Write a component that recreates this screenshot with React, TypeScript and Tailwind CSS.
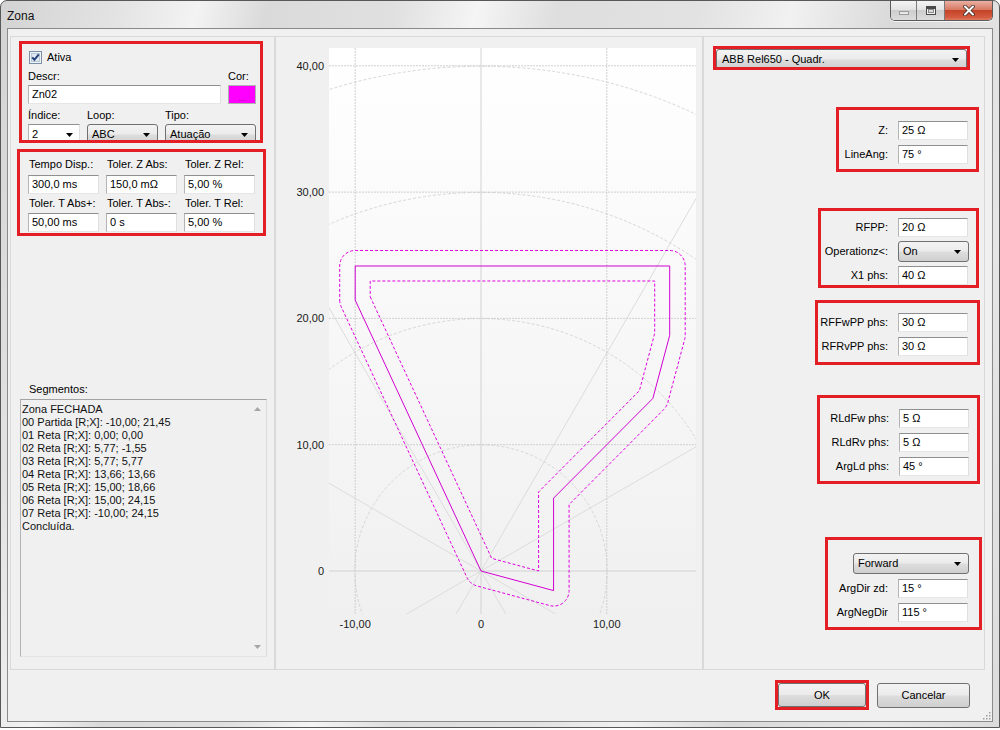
import React from "react";

type Pt = [number, number];

// chart scale: page pixels per unit
const sx = (r: number) => 481 + r * 12.58;
const sy = (x: number) => 571 - x * 12.63;

const zone: Pt[] = (
  [
    [-10, 21.45],
    [0, 0],
    [5.77, -1.55],
    [5.77, 5.77],
    [13.66, 13.66],
    [15, 18.66],
    [15, 24.15],
    [-10, 24.15],
  ] as Pt[]
).map(([r, x]) => [sx(r), sy(x)] as Pt);

function offsetPath(pts: Pt[], d: number, round: boolean) {
  const n = pts.length;
  const dirs = pts.map((p, i) => {
    const q = pts[(i + 1) % n];
    const dx = q[0] - p[0];
    const dy = q[1] - p[1];
    const l = Math.hypot(dx, dy);
    return [dx / l, dy / l] as Pt;
  });
  const norms = dirs.map(([dx, dy]) => [-dy, dx] as Pt);
  const parts: string[] = [];
  const f = (v: number) => v.toFixed(2);
  pts.forEach((p, i) => {
    const j = (i - 1 + n) % n;
    const e1 = dirs[j];
    const e2 = dirs[i];
    const a1: Pt = [p[0] + norms[j][0] * d, p[1] + norms[j][1] * d];
    const a2: Pt = [p[0] + norms[i][0] * d, p[1] + norms[i][1] * d];
    const cr = e1[0] * e2[1] - e1[1] * e2[0];
    const cmd = parts.length ? "L" : "M";
    if (round && cr < 0) {
      parts.push(`${cmd}${f(a1[0])},${f(a1[1])}`);
      parts.push(`A${d},${d} 0 0 0 ${f(a2[0])},${f(a2[1])}`);
    } else {
      const t = ((a2[0] - a1[0]) * e2[1] - (a2[1] - a1[1]) * e2[0]) / cr;
      parts.push(`${cmd}${f(a1[0] + e1[0] * t)},${f(a1[1] + e1[1] * t)}`);
    }
  });
  return parts.join(" ") + " Z";
}

function Chart() {
  const ox = 481;
  const oy = 571;
  const labelFont = "'Liberation Sans', Arial, sans-serif";
  const zonePath =
    zone.map((p, i) => `${i ? "L" : "M"}${p[0].toFixed(2)},${p[1].toFixed(2)}`).join(" ") + " Z";
  return (
    <svg width={426} height={632} viewBox="276 37 426 632" className="block">
      <defs>
        <linearGradient id="plotBg" x1="0" y1="0" x2="0" y2="1">
          <stop offset="0" stopColor="#ffffff" />
          <stop offset="1" stopColor="#f0f0f0" />
        </linearGradient>
        <clipPath id="plotClip">
          <rect x={329} y={48} width={367} height={566} />
        </clipPath>
      </defs>
      <rect x={329} y={48} width={367} height={566} fill="url(#plotBg)" />
      <g clipPath="url(#plotClip)" fill="none">
        {[1, 2, 3, 4].map((k) => (
          <circle key={k} cx={ox} cy={oy} r={126.2 * k} stroke="#d6d6d6" strokeDasharray="3 2" />
        ))}
        {[30, 60, 120, 150, 210, 240, 300, 330].map((a) => (
          <line
            key={a}
            x1={ox}
            y1={oy}
            x2={ox + 800 * Math.cos((a * Math.PI) / 180)}
            y2={oy - 800 * Math.sin((a * Math.PI) / 180)}
            stroke="#dcdcdc"
          />
        ))}
        {[sx(-10), sx(10)].map((x) => (
          <line key={x} x1={x} y1={48} x2={x} y2={614} stroke="#cfcfcf" strokeDasharray="2 1" />
        ))}
        {[10, 20, 30, 40].map((v) => (
          <line key={v} x1={329} y1={sy(v)} x2={696} y2={sy(v)} stroke="#cfcfcf" strokeDasharray="2 1" />
        ))}
        <line x1={ox} y1={48} x2={ox} y2={614} stroke="#d2d2d2" />
        <line x1={329} y1={oy} x2={696} y2={oy} stroke="#d2d2d2" />
        <path d={offsetPath(zone, 15.5, true)} stroke="#e000e0" strokeDasharray="3 2" />
        <path d={offsetPath(zone, -15, false)} stroke="#e000e0" strokeDasharray="3 2" />
        <path d={zonePath} stroke="#d100d1" />
      </g>
      <g fontFamily={labelFont} fontSize={11} fill="#1a1a1a">
        {[
          ["40,00", 40],
          ["30,00", 30],
          ["20,00", 20],
          ["10,00", 10],
          ["0", 0],
        ].map(([t, v]) => (
          <text key={t as string} x={324} y={sy(v as number) + 4} textAnchor="end">
            {t}
          </text>
        ))}
        {[
          ["-10,00", -10],
          ["0", 0],
          ["10,00", 10],
        ].map(([t, v]) => (
          <text key={t as string} x={sx(v as number)} y={628} textAnchor="middle">
            {t}
          </text>
        ))}
      </g>
    </svg>
  );
}

function Arrow() {
  return (
    <svg width="7" height="4" viewBox="0 0 7 4" className="shrink-0">
      <polygon points="0,0 7,0 3.5,4" fill="#000" />
    </svg>
  );
}

function TextBox({ value, className = "" }: { value: string; className?: string }) {
  return (
    <div
      className={`h-[19px] shrink-0 bg-white border border-t-[#8e8f8f] border-l-[#b4b4b4] border-r-[#dfdfdf] border-b-[#e6e6e6] flex items-center pl-[3px] whitespace-nowrap ${className}`}
    >
      {value}
    </div>
  );
}

function Combo({ value, className = "" }: { value: string; className?: string }) {
  return (
    <div
      className={`h-[21px] shrink-0 rounded-[3px] border border-[#707070] bg-[linear-gradient(#f3f3f3_0%,#ebebeb_48%,#dddddd_52%,#cfcfcf_100%)] flex items-center pl-[4px] pr-[7px] whitespace-nowrap ${className}`}
    >
      <span className="flex-1">{value}</span>
      <Arrow />
    </div>
  );
}

function Row({ label, children }: { label: string; children: React.ReactNode }) {
  return (
    <div className="flex items-center justify-end gap-[10px]">
      <span className="whitespace-nowrap">{label}</span>
      {children}
    </div>
  );
}

const segmentos = [
  "Zona FECHADA",
  "00 Partida [R;X]: -10,00; 21,45",
  "01 Reta [R;X]: 0,00; 0,00",
  "02 Reta [R;X]: 5,77; -1,55",
  "03 Reta [R;X]: 5,77; 5,77",
  "04 Reta [R;X]: 13,66; 13,66",
  "05 Reta [R;X]: 15,00; 18,66",
  "06 Reta [R;X]: 15,00; 24,15",
  "07 Reta [R;X]: -10,00; 24,15",
  "Concluída.",
];

function LeftPanel() {
  return (
    <div className="w-[265px] h-[634px] shrink-0 border border-[#d9d9d9] flex flex-col">
      <div className="ml-[8px] mt-[4px] w-[244px] h-[102px] border-[3px] border-[#e31e24] overflow-hidden flex flex-col">
        <div className="mt-[7px] ml-[7px] flex items-center gap-[5px] h-[13px]">
          <svg width="13" height="13" viewBox="0 0 13 13">
            <rect x="0.5" y="0.5" width="12" height="12" fill="#eef3f8" stroke="#7b8ea6" />
            <rect x="2.5" y="2.5" width="8" height="8" fill="#dfe7f0" stroke="#b9c6d6" />
            <path d="M3.2 6.4 L5.4 8.8 L9.8 3.4" stroke="#24417a" strokeWidth="2" fill="none" />
          </svg>
          <span>Ativa</span>
        </div>
        <div className="mt-[6px] ml-[6px] flex h-[13px]">
          <span className="w-[200px]">Descr:</span>
          <span>Cor:</span>
        </div>
        <div className="mt-[2px] ml-[6px] flex gap-[7px]">
          <TextBox value="Zn02" className="w-[193px]" />
          <div className="w-[28px] h-[19px] bg-[#ff00ff] border border-[#b0b0b0] flex items-end justify-center text-[9px] leading-[10px] text-[#a000a0]">
            ...
          </div>
        </div>
        <div className="mt-[5px] ml-[6px] flex h-[13px]">
          <span className="w-[59px]">Índice:</span>
          <span className="w-[78px]">Loop:</span>
          <span>Tipo:</span>
        </div>
        <div className="mt-[2px] ml-[6px] flex gap-[7px]">
          <div className="w-[52px] h-[21px] bg-white border border-t-[#8e8f8f] border-l-[#b4b4b4] border-r-[#dfdfdf] border-b-[#e6e6e6] flex items-center pl-[3px] pr-[6px]">
            <span className="flex-1">2</span>
            <Arrow />
          </div>
          <Combo value="ABC" className="w-[71px]" />
          <Combo value="Atuação" className="w-[91px]" />
        </div>
      </div>

      <div className="ml-[6px] mt-[6px] w-[249px] h-[87px] border-[3px] border-[#e31e24] overflow-hidden">
        <div className="pl-[8px] pt-[6px] grid grid-cols-[71px_71px_71px] gap-x-[7px]">
          <span className="pl-[1px] h-[13px] whitespace-nowrap">Tempo Disp.:</span>
          <span className="pl-[1px] h-[13px] whitespace-nowrap">Toler. Z Abs:</span>
          <span className="pl-[1px] h-[13px] whitespace-nowrap">Toler. Z Rel:</span>
          <TextBox value="300,0 ms" className="mt-[4px]" />
          <TextBox value="150,0 mΩ" className="mt-[4px]" />
          <TextBox value="5,00 %" className="mt-[4px]" />
          <span className="pl-[1px] mt-[3px] h-[13px] whitespace-nowrap">Toler. T Abs+:</span>
          <span className="pl-[1px] mt-[3px] h-[13px] whitespace-nowrap">Toler. T Abs-:</span>
          <span className="pl-[1px] mt-[3px] h-[13px] whitespace-nowrap">Toler. T Rel:</span>
          <TextBox value="50,00 ms" className="mt-[3px]" />
          <TextBox value="0 s" className="mt-[3px]" />
          <TextBox value="5,00 %" className="mt-[3px]" />
        </div>
      </div>

      <span className="mt-[147px] ml-[18px] h-[13px]">Segmentos:</span>
      <div className="mt-[3px] ml-[9px] w-[247px] h-[258px] bg-[#f0f0f0] border border-t-[#a3a3a3] border-l-[#b4b4b4] border-r-[#dcdcdc] border-b-[#e3e3e3] flex">
        <div className="flex-1 pl-[1px] pt-[3px] text-[#111]">
          {segmentos.map((s) => (
            <div key={s} className="h-[13px] whitespace-nowrap">
              {s}
            </div>
          ))}
        </div>
        <div className="w-[17px] flex flex-col items-center justify-between py-[7px]">
          <svg width="7" height="4" viewBox="0 0 7 4">
            <polygon points="0,4 7,4 3.5,0" fill="#a6a6a6" />
          </svg>
          <svg width="7" height="4" viewBox="0 0 7 4">
            <polygon points="0,0 7,0 3.5,4" fill="#a6a6a6" />
          </svg>
        </div>
      </div>
    </div>
  );
}

function RightPanel() {
  return (
    <div className="w-[282px] h-[634px] shrink-0 border border-[#d9d9d9] flex flex-col">
      <div className="ml-[9px] mt-[9px] w-[257px] h-[24px] border-[3px] border-[#e31e24] overflow-hidden">
        <Combo value="ABB Rel650 - Quadr." className="w-[251px] pl-[5px]" />
      </div>

      <div className="ml-[132px] mt-[37px] w-[143px] h-[65px] border-[3px] border-[#e31e24] pt-[11px] pr-[8px] flex flex-col gap-[5px]">
        <Row label="Z:">
          <TextBox value="25 Ω" className="w-[70px]" />
        </Row>
        <Row label="LineAng:">
          <TextBox value="75 °" className="w-[70px]" />
        </Row>
      </div>

      <div className="ml-[114px] mt-[36px] w-[161px] h-[80px] border-[3px] border-[#e31e24] pt-[7px] pr-[7px] flex flex-col gap-[4px]">
        <Row label="RFPP:">
          <TextBox value="20 Ω" className="w-[70px] mr-[1px]" />
        </Row>
        <Row label="Operationz<:">
          <Combo value="On" className="w-[71px] h-[20px]" />
        </Row>
        <Row label="X1 phs:">
          <TextBox value="40 Ω" className="w-[70px] mr-[1px]" />
        </Row>
      </div>

      <div className="ml-[111px] mt-[12px] w-[165px] h-[65px] border-[3px] border-[#e31e24] pt-[10px] pr-[9px] flex flex-col gap-[5px]">
        <Row label="RFFwPP phs:">
          <TextBox value="30 Ω" className="w-[70px]" />
        </Row>
        <Row label="RFRvPP phs:">
          <TextBox value="30 Ω" className="w-[70px]" />
        </Row>
      </div>

      <div className="ml-[113px] mt-[30px] w-[163px] h-[89px] border-[3px] border-[#e31e24] pt-[11px] pr-[8px] flex flex-col gap-[5px]">
        <Row label="RLdFw phs:">
          <TextBox value="5 Ω" className="w-[70px]" />
        </Row>
        <Row label="RLdRv phs:">
          <TextBox value="5 Ω" className="w-[70px]" />
        </Row>
        <Row label="ArgLd phs:">
          <TextBox value="45 °" className="w-[70px]" />
        </Row>
      </div>

      <div className="ml-[121px] mt-[53px] w-[157px] h-[93px] border-[3px] border-[#e31e24] pt-[13px] pr-[11px] flex flex-col items-end gap-[5px]">
        <Combo value="Forward" className="w-[116px] h-[20px] -mr-[1px]" />
        <Row label="ArgDir zd:">
          <TextBox value="15 °" className="w-[70px]" />
        </Row>
        <Row label="ArgNegDir">
          <TextBox value="115 °" className="w-[70px]" />
        </Row>
      </div>
    </div>
  );
}

function CaptionButtons() {
  return (
    <div className="ml-auto flex h-[20px] rounded-b-[5px] border border-t-0 border-[#5b5b5b] overflow-hidden shadow-[0_1px_0_rgba(255,255,255,0.7)]">
      <div className="w-[26px] border-r border-[#7a7a7a] bg-[linear-gradient(#f4f4f4_0%,#e4e4e4_45%,#cdcdcd_50%,#dcdcdc_100%)] flex items-center justify-center">
        <svg width="10" height="4" viewBox="0 0 10 4" className="mt-[5px]">
          <rect x="0.5" y="0.5" width="9" height="3" fill="#e8e8e8" stroke="#9a9a9a" />
        </svg>
      </div>
      <div className="w-[28px] border-r border-[#7a7a7a] bg-[linear-gradient(#f4f4f4_0%,#e4e4e4_45%,#cdcdcd_50%,#dcdcdc_100%)] flex items-center justify-center">
        <svg width="10" height="9" viewBox="0 0 10 9">
          <rect x="0.5" y="0.5" width="9" height="8" fill="#f2f2f2" stroke="#4a4a4a" />
          <rect x="1" y="1" width="8" height="2" fill="#4a4a4a" />
          <rect x="2.5" y="3.5" width="5" height="3" fill="#dcdcdc" stroke="#8a8a8a" />
        </svg>
      </div>
      <div className="w-[47px] bg-[linear-gradient(#eab0a2_0%,#d87a64_45%,#c4442a_50%,#d45a3e_85%,#e07a5f_100%)] flex items-center justify-center">
        <svg width="12" height="11" viewBox="0 0 12 11">
          <path d="M2 1.5 L10 9.5 M10 1.5 L2 9.5" stroke="#3a2a2a" strokeWidth="3.6" strokeLinecap="round" />
          <path d="M2 1.5 L10 9.5 M10 1.5 L2 9.5" stroke="#ffffff" strokeWidth="2" strokeLinecap="round" />
        </svg>
      </div>
    </div>
  );
}

export default function App() {
  return (
    <div className="w-[1000px] h-[730px] bg-white overflow-hidden font-['Liberation_Sans',Arial,sans-serif] text-[11px] leading-[13px] text-black">
      <div className="h-[728px] rounded-t-[7px] border border-[#585858] bg-[linear-gradient(103deg,#d3d3d3_0%,#e3e3e3_10%,#f3f3f3_17%,#dadada_23%,#e0e0e0_34%,#f5f5f5_41%,#dedede_48%,#e2e2e2_60%,#f1f1f1_68%,#d9d9d9_77%,#e6e6e6_90%,#dcdcdc_100%)] flex flex-col px-[6px] pb-[5px]">
        <div className="h-[27px] flex items-start shrink-0">
          <span className="mt-[8px] text-[12px] leading-[14px] text-[#111]">Zona</span>
          <CaptionButtons />
        </div>
        <div className="relative flex-1 border border-[#8a8a8a] bg-[#f0f0f0] flex flex-col">
          <div className="mt-[7px] ml-[2px] flex">
            <LeftPanel />
            <div className="w-[428px] h-[634px] shrink-0 border border-[#d9d9d9]">
              <Chart />
            </div>
            <RightPanel />
          </div>
          <div className="mt-[10px] flex justify-end items-center gap-[8px] pr-[22px]">
            <div className="w-[94px] h-[30px] border-[3px] border-[#e31e24] overflow-hidden">
              <div className="w-[88px] h-[24px] rounded-[3px] border border-[#707070] bg-[linear-gradient(#f3f3f3_0%,#ebebeb_48%,#dddddd_52%,#cfcfcf_100%)] flex items-center justify-center">
                OK
              </div>
            </div>
            <div className="w-[93px] h-[25px] rounded-[3px] border border-[#707070] bg-[linear-gradient(#f3f3f3_0%,#ebebeb_48%,#dddddd_52%,#cfcfcf_100%)] flex items-center justify-center">
              Cancelar
            </div>
          </div>
          <svg width="9" height="9" viewBox="0 0 9 9" className="absolute right-[1px] bottom-[1px]">
            {[
              [7, 1],
              [7, 4],
              [4, 4],
              [7, 7],
              [4, 7],
              [1, 7],
            ].map(([x, y]) => (
              <rect key={`${x}-${y}`} x={x} y={y} width="1.5" height="1.5" fill="#a0a0a0" />
            ))}
          </svg>
        </div>
      </div>
    </div>
  );
}
